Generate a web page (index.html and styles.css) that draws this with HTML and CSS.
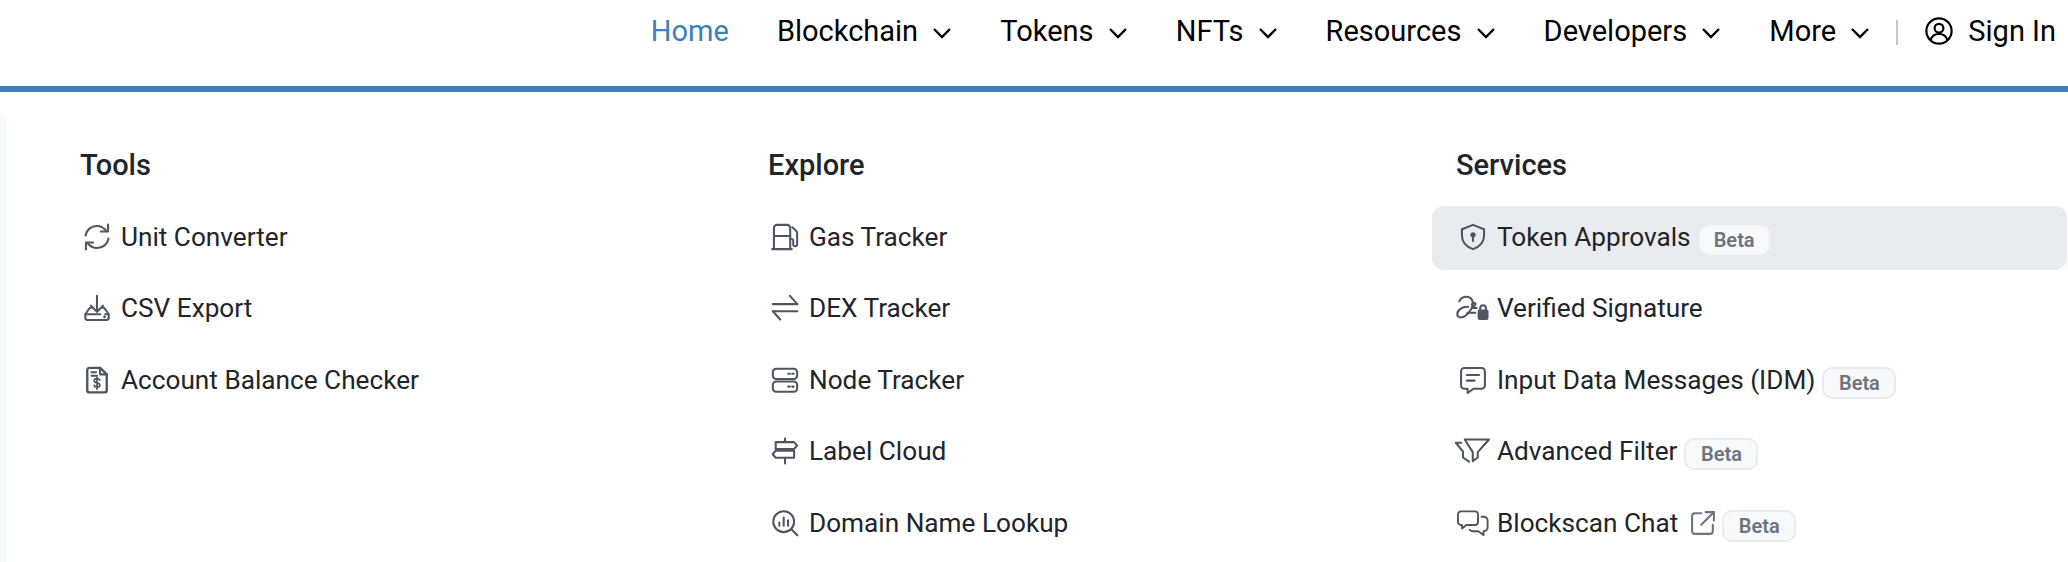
FILE: index.html
```html
<!DOCTYPE html>
<html lang="en">
<head>
<meta charset="utf-8">
<title>Explorer menu</title>
<link rel="stylesheet" href="styles.css">
</head>
<body>
<header class="topbar">
  <nav class="nav">
    <a class="nav-link active">Home</a>
    <a class="nav-link">Blockchain <svg class="chev" viewBox="0 0 20 12"><path d="M2 2l8 8 8-8"/></svg></a>
    <a class="nav-link">Tokens <svg class="chev" viewBox="0 0 20 12"><path d="M2 2l8 8 8-8"/></svg></a>
    <a class="nav-link">NFTs <svg class="chev" viewBox="0 0 20 12"><path d="M2 2l8 8 8-8"/></svg></a>
    <a class="nav-link">Resources <svg class="chev" viewBox="0 0 20 12"><path d="M2 2l8 8 8-8"/></svg></a>
    <a class="nav-link">Developers <svg class="chev" viewBox="0 0 20 12"><path d="M2 2l8 8 8-8"/></svg></a>
    <a class="nav-link">More <svg class="chev" viewBox="0 0 20 12"><path d="M2 2l8 8 8-8"/></svg></a>
    <span class="nav-sep"></span>
    <a class="nav-link signin"><svg class="user" viewBox="0 0 28 28"><circle cx="14" cy="14" r="12.6"/><circle cx="14" cy="11.2" r="4.4"/><path d="M5.6 23.4c1-4.4 4.4-6.4 8.4-6.4s7.4 2 8.4 6.4"/></svg>Sign In</a>
  </nav>
</header>
<div class="stage">
  <div class="strip"></div>
  <main class="menu">
    <section class="col">
      <h3 class="col-title">Tools</h3>
      <a class="item"><span class="ic"><svg viewBox="0 0 24 24"><path d="M1.400 10.600C2.200 5.400 6.600 1.800 11.800 1.800c3.600 0 6.900 1.800 9 4.800"/><path d="M22.200 .4V7H15.600"/><path d="M22.600 13.400c-.8 5.200-5.200 8.800-10.400 8.800-3.600 0-6.900-1.800-9-4.800"/><path d="M1.800 23.600V17H8.400"/></svg></span><span class="txt">Unit Converter</span></a>
      <a class="item"><span class="ic"><svg viewBox="0 0 24 24"><path d="M12 .8v14.400"/><path d="M6.400 9.800l5.600 5.600 5.600-5.600"/><path d="M7 11.800H5.400L1.200 17.800v3.200a2 2 0 0 0 2 2h17.600a2 2 0 0 0 2-2v-3.200l-4.200-6H17"/><path d="M1.400 17.800h13.600"/><path d="M22.600 17.800h-3"/><circle class="dot" cx="19" cy="20.200" r="1.300"/></svg></span><span class="txt">CSV Export</span></a>
      <a class="item"><span class="ic"><svg viewBox="0 0 24 24"><path class="bold" d="M15 .8H5a2 2 0 0 0-2 2v18.600a2 2 0 0 0 2 2h14a2 2 0 0 0 2-2V6.800z"/><path d="M14.800 1v5.800h6"/><path d="M6.800 4.800h4.400M6.800 8h5.200"/><path class="thin" d="M14.600 12.200c-.4-1-1.400-1.400-2.600-1.400-1.500 0-2.600.8-2.600 1.900 0 2.700 5.300 1.200 5.300 3.900 0 1.200-1.200 1.900-2.700 1.900-1.300 0-2.300-.5-2.700-1.500M12 9.400v11"/></svg></span><span class="txt">Account Balance Checker</span></a>
    </section>
    <section class="col">
      <h3 class="col-title">Explore</h3>
      <a class="item"><span class="ic"><svg viewBox="0 0 24 24"><path d="M1.800 23V3.600A2.800 2.800 0 0 1 4.600.8h9.400a2.800 2.800 0 0 1 2.800 2.800V23"/><path d="M.2 23.200h18"/><path d="M1.800 11h15"/><path d="M16.800 13.800h1.200c1 0 1.600.8 1.600 1.600v3.200c0 1 .8 1.800 1.800 1.800s1.800-.8 1.800-1.800V8.600c0-1-.4-1.800-1-2.400L18.800 3"/></svg></span><span class="txt">Gas Tracker</span></a>
      <a class="item"><span class="ic"><svg viewBox="0 0 24 24"><path d="M.8 8.400h22.600"/><path d="M16.600 .8l6.800 7.600"/><path d="M23.400 15H.8"/><path d="M7.600 22.600L.8 15"/></svg></span><span class="txt">DEX Tracker</span></a>
      <a class="item"><span class="ic"><svg viewBox="0 0 24 24"><rect x=".8" y="1.600" width="22.400" height="9.400" rx="3"/><rect x=".8" y="13.400" width="22.400" height="9.400" rx="3"/><path d="M15 6.300h1.400M18.600 6.300h1.400M15 18.100h1.400M18.600 18.100h1.400"/></svg></span><span class="txt">Node Tracker</span></a>
      <a class="item"><span class="ic"><svg viewBox="0 0 24 24"><path d="M12 .6v3.200M12 18.200v5.400"/><path d="M3.400 3.800h17l2.800 3.200-2.800 3.200h-17z"/><path d="M20.400 11.800h-17L.6 15l2.800 3.200h17z"/></svg></span><span class="txt">Label Cloud</span></a>
      <a class="item"><span class="ic"><svg viewBox="0 0 24 24"><circle cx="10.800" cy="10.800" r="9.600"/><path d="M18 18l5.400 5.400"/><path d="M6.800 11.500v3M10.800 6.900v7.600M14.800 9.500v5"/></svg></span><span class="txt">Domain Name Lookup</span></a>
    </section>
    <section class="col">
      <h3 class="col-title">Services</h3>
      <a class="item hover"><span class="ic"><svg viewBox="0 0 24 24"><path d="M12 .8L1.800 4.800v5.800c0 6 4.200 10.400 10.200 12.600 6-2.200 10.200-6.600 10.200-12.600V4.800z"/><circle class="dot" cx="12" cy="10" r="2.400"/><path d="M12 10.400v5.400"/></svg></span><span class="txt">Token Approvals</span><span class="badge plain">Beta</span></a>
      <a class="item"><span class="ic"><svg viewBox="0 0 30 24"><path d="M3 5.800C4.600 1.800 9.600.4 13 2.600c4 2.600 2.800 8.800-.6 13-3 3.600-7 6-9.800 4.600-2.200-1.200-1.800-5 1.200-7.200 2.600-1.800 5.800-2.200 7.400-2"/><path d="M14.600 8.600c1-1.200 3-1.600 3.400-.4.400 1.400-2 2.600-2.800 3.800h3.800"/><path d="M10.600 16.400h7.200"/><rect class="fill" x="20" y="13.400" width="10" height="9.600" rx="1.800"/><path d="M22.400 14v-2a2.600 2.600 0 0 1 5.200 0v2"/></svg></span><span class="txt">Verified Signature</span></a>
      <a class="item"><span class="ic"><svg viewBox="0 0 24 24"><path d="M4 1h16a3 3 0 0 1 3 3v13a3 3 0 0 1-3 3h-7.400L7 24v-4H4a3 3 0 0 1-3-3V4a3 3 0 0 1 3-3z"/><path d="M6.400 7.400h11.200M6.400 12.600h7"/></svg></span><span class="txt">Input Data Messages (IDM)</span><span class="badge">Beta</span></a>
      <a class="item"><span class="ic"><svg viewBox="0 0 32 24"><path d="M9 1.400h22.400L21 13v5l-4.600 3.400V13z"/><path d="M5.800 4.400H.8L7.400 12.600V18L13 21.800"/></svg></span><span class="txt">Advanced Filter</span><span class="badge">Beta</span></a>
      <a class="item"><span class="ic"><svg viewBox="0 0 32 26"><path d="M4 1.400h14a3 3 0 0 1 3 3V12a3 3 0 0 1-3 3H9.400L5 18.400V15H4a3 3 0 0 1-3-3V4.400a3 3 0 0 1 3-3z"/><path d="M24.600 6.800H27a3.600 3.600 0 0 1 3.600 3.600v7.200A3.600 3.600 0 0 1 27 21.200h-.4v3.800l-5.400-3.800h-6a3 3 0 0 1-2.400-1.400"/></svg></span><span class="txt">Blockscan Chat</span><svg class="ext" viewBox="0 0 22 22"><path d="M9.400 2H3.400A2.400 2.400 0 0 0 1 4.400v14.200A2.400 2.400 0 0 0 3.400 21h14.200a2.400 2.400 0 0 0 2.400-2.400v-6"/><path d="M9.400 12.600L20.800 1.200"/><path d="M13.400 1h7.600v7.600"/></svg><span class="badge">Beta</span></a>
    </section>
  </main>
</div>
</body>
</html>
```
FILE: styles.css
```css
* { box-sizing: border-box; }
html, body { margin: 0; height: 562px; overflow: hidden; background: #fff; }
body { font-family: Roboto, "Liberation Sans", sans-serif; color: #212529; }
.topbar { height: 92px; border-bottom: 6px solid #3d80bc; display: flex; justify-content: flex-end; padding: 0 12px 0 0; }
.nav { display: flex; align-items: flex-start; padding-top: 12px; height: 60px; }
.nav-link { display: flex; align-items: center; font-size: 29px; line-height: 38px; color: #000; margin-left: 48px; white-space: pre; }
.nav-link.active { color: #3d80bc; margin-left: 0; }
.chev { width: 20px; height: 12px; margin-left: 7px; margin-top: 3px; fill: none; stroke: #000; stroke-width: 2.4; }
.nav-sep { width: 2px; height: 25px; background: #c4c6c9; margin: 8px 0 0 26px; }
.signin { margin-left: 27px; }
.user { width: 28px; height: 28px; margin-right: 15px; fill: none; stroke: #000; stroke-width: 2.2; }
.stage { display: flex; height: 470px; }
.strip { width: 7px; height: 447px; margin-top: 23px; background: #f8f9fa; border-top-right-radius: 14px; }
.menu { flex: 1; display: grid; grid-template-columns: 635px 635px 635px; column-gap: 53px; padding: 0 0 0 49px; }
.col { display: flex; flex-direction: column; }
.col-title { margin: 54px 0 22px 24px; font-size: 29px; line-height: 38px; font-weight: 500; color: #212529; }
.item { display: flex; align-items: center; height: 64px; margin-bottom: 7.5px; padding: 0 0 3px 24px; border-radius: 12px; font-size: 26.2px; color: #212529; white-space: nowrap; }
.item.hover { background: #e9ebef; }
.ic { width: 33px; margin-right: 8px; display: flex; justify-content: center; }
.ic svg { height: 26px; width: auto; fill: none; stroke: #4f5660; stroke-width: 1.9; stroke-linecap: round; stroke-linejoin: round; overflow: visible; }
.ic .dot, .ic .fill { fill: #4f5660; stroke: none; }
.ic .thin { stroke-width: 1.6; }
.ic .bold { stroke-width: 2.2; }
.ext { width: 24px; height: 24px; margin-left: 13px; fill: none; stroke: #6c757d; stroke-width: 1.9; stroke-linecap: round; stroke-linejoin: round; }
.badge { margin-left: 7px; margin-top: 6px; height: 32px; width: 74px; display: flex; align-items: center; justify-content: center; border: 2px solid #e9ecef; border-radius: 10px; background: #f8f9fa; color: #6c757d; font-size: 20px; font-weight: 600; }
.badge.plain { border-color: #f4f5f7; width: 71px; height: 30px; margin-left: 8px; }
```
